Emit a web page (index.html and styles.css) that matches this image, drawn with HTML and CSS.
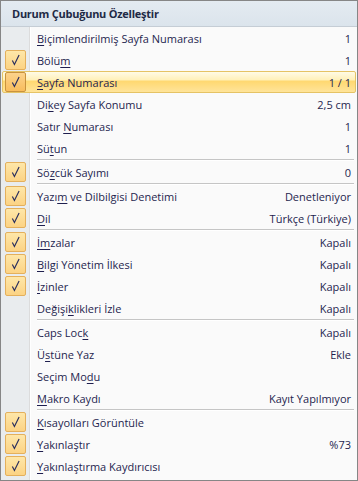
FILE: index.html
```html
<!DOCTYPE html>
<html lang="tr">
<head>
    <meta charset="UTF-8">
    <meta name="viewport" content="width=device-width, initial-scale=1.0">
    <title>Durum Çubuğunu Özelleştir</title>
    <link rel="stylesheet" href="styles.css">
</head>
<body>

<div class="menu">
    <div class="menu-title">Durum Çubuğunu Özelleştir</div>
    <ul class="menu-list">
        <li class="item"><span class="gutter"></span><span class="label"><u>B</u>içimlendirilmiş Sayfa Numarası</span><span class="value">1</span></li>
        <li class="item on"><span class="gutter"><span class="check"><svg viewBox="0 0 21 20"><path d="M7 10.5 L9.3 15 L14.5 4.5"/></svg></span></span><span class="label">Bölü<u>m</u></span><span class="value">1</span></li>
        <li class="item on hover"><span class="gutter"><span class="check"><svg viewBox="0 0 21 20"><path d="M7 10.5 L9.3 15 L14.5 4.5"/></svg></span></span><span class="label"><u>S</u>ayfa Numarası</span><span class="value">1 / 1</span></li>
        <li class="item"><span class="gutter"></span><span class="label">Di<u>k</u>ey Sayfa Konumu</span><span class="value">2,5 cm</span></li>
        <li class="item"><span class="gutter"></span><span class="label">Satır <u>N</u>umarası</span><span class="value">1</span></li>
        <li class="item"><span class="gutter"></span><span class="label">Sü<u>t</u>un</span><span class="value">1</span></li>
        <li class="sep"></li>
        <li class="item on"><span class="gutter"><span class="check"><svg viewBox="0 0 21 20"><path d="M7 10.5 L9.3 15 L14.5 4.5"/></svg></span></span><span class="label">Sö<u>z</u>cük Sayımı</span><span class="value">0</span></li>
        <li class="sep"></li>
        <li class="item on"><span class="gutter"><span class="check"><svg viewBox="0 0 21 20"><path d="M7 10.5 L9.3 15 L14.5 4.5"/></svg></span></span><span class="label">Yazı<u>m</u> ve Dilbilgisi Denetimi</span><span class="value">Denetleniyor</span></li>
        <li class="item on"><span class="gutter"><span class="check"><svg viewBox="0 0 21 20"><path d="M7 10.5 L9.3 15 L14.5 4.5"/></svg></span></span><span class="label"><u>D</u>il</span><span class="value">Türkçe (Türkiye)</span></li>
        <li class="sep"></li>
        <li class="item on"><span class="gutter"><span class="check"><svg viewBox="0 0 21 20"><path d="M7 10.5 L9.3 15 L14.5 4.5"/></svg></span></span><span class="label"><u>İm</u>zalar</span><span class="value">Kapalı</span></li>
        <li class="item on"><span class="gutter"><span class="check"><svg viewBox="0 0 21 20"><path d="M7 10.5 L9.3 15 L14.5 4.5"/></svg></span></span><span class="label"><u>B</u>ilgi Yönetim İlkesi</span><span class="value">Kapalı</span></li>
        <li class="item on"><span class="gutter"><span class="check"><svg viewBox="0 0 21 20"><path d="M7 10.5 L9.3 15 L14.5 4.5"/></svg></span></span><span class="label"><u>İ</u>zinler</span><span class="value">Kapalı</span></li>
        <li class="item"><span class="gutter"></span><span class="label">Değişi<u>k</u>likleri İzle</span><span class="value">Kapalı</span></li>
        <li class="sep"></li>
        <li class="item"><span class="gutter"></span><span class="label">Caps Loc<u>k</u></span><span class="value">Kapalı</span></li>
        <li class="item"><span class="gutter"></span><span class="label">Ü<u>s</u>tüne Yaz</span><span class="value">Ekle</span></li>
        <li class="item"><span class="gutter"></span><span class="label">Seçim Mo<u>d</u>u</span><span class="value"></span></li>
        <li class="item"><span class="gutter"></span><span class="label"><u>M</u>akro Kaydı</span><span class="value">Kayıt Yapılmıyor</span></li>
        <li class="sep"></li>
        <li class="item on"><span class="gutter"><span class="check"><svg viewBox="0 0 21 20"><path d="M7 10.5 L9.3 15 L14.5 4.5"/></svg></span></span><span class="label"><u>K</u>ısayolları Görüntüle</span><span class="value"></span></li>
        <li class="item on"><span class="gutter"><span class="check"><svg viewBox="0 0 21 20"><path d="M7 10.5 L9.3 15 L14.5 4.5"/></svg></span></span><span class="label"><u>Y</u>akınlaştır</span><span class="value">%73</span></li>
        <li class="item on"><span class="gutter"><span class="check"><svg viewBox="0 0 21 20"><path d="M7 10.5 L9.3 15 L14.5 4.5"/></svg></span></span><span class="label"><u>Y</u>akınlaştırma Kaydırıcısı</span><span class="value"></span></li>
    </ul>
</div>

</body>
</html>
```

FILE: styles.css
```css
body {
    margin: 0;
    background: #fff;
    font-family: "Open Sans", "Noto Sans", sans-serif;
    font-size: 11px;
    color: #1f1f4f;
}
.menu {
    width: 356px;
    height: 479px;
    border: 1px solid #868686;
    background: #fafafa;
    display: flex;
    flex-direction: column;
}
.menu-title {
    height: 26px;
    line-height: 26px;
    padding-left: 11px;
    background: linear-gradient(#e4ebf1, #dbe4ec);
    border-bottom: 1px solid #c5cdd5;
    font-weight: bold;
    letter-spacing: -0.25px;
    color: #1e2a45;
    box-sizing: border-box;
}
.menu-list {
    list-style: none;
    margin: 0;
    padding: 0 0 3px 0;
    flex: 1;
    background: linear-gradient(to right, #e9ecee 0, #e9ecee 28px, #dcdcdc 28px, #dcdcdc 29px, #fff 29px, #fff 30px, transparent 30px);
}
.item {
    height: 22px;
    display: flex;
    align-items: center;
    margin: 0 1px 0 1px;
    border: 1px solid transparent;
    box-sizing: border-box;
}
.item.hover {
    border-color: #e5c365;
    border-radius: 2px;
    background: linear-gradient(#fffbe6 0%, #fff0b8 40%, #ffd870 45%, #ffe49a 100%);
}
.gutter {
    width: 28px;
    height: 20px;
    display: flex;
    align-items: center;
    padding-left: 2px;
    box-sizing: border-box;
}
.check {
    width: 21px;
    height: 20px;
    box-sizing: border-box;
    border: 1px solid #e4b05c;
    border-radius: 2px;
    background: linear-gradient(#fee7a9, #fcd384);
    display: flex;
}
.hover .check {
    border-color: #c9933e;
    background: linear-gradient(#fcd38c, #f9bd5c);
}
.check svg {
    width: 100%;
    height: 100%;
}
.check path {
    fill: none;
    stroke: #2a2f5e;
    stroke-width: 1.3;
}
.label {
    flex: 1;
    padding-left: 6px;
    white-space: nowrap;
}
.label u {
    text-decoration-thickness: 1px;
    text-underline-offset: 2px;
}
.value {
    padding-right: 4px;
    white-space: nowrap;
}
.sep {
    height: 2px;
    margin-left: 36px;
    margin-right: 3px;
    border-top: 1px solid #c5c5c5;
    box-sizing: border-box;
    background: #fff;
}
```
